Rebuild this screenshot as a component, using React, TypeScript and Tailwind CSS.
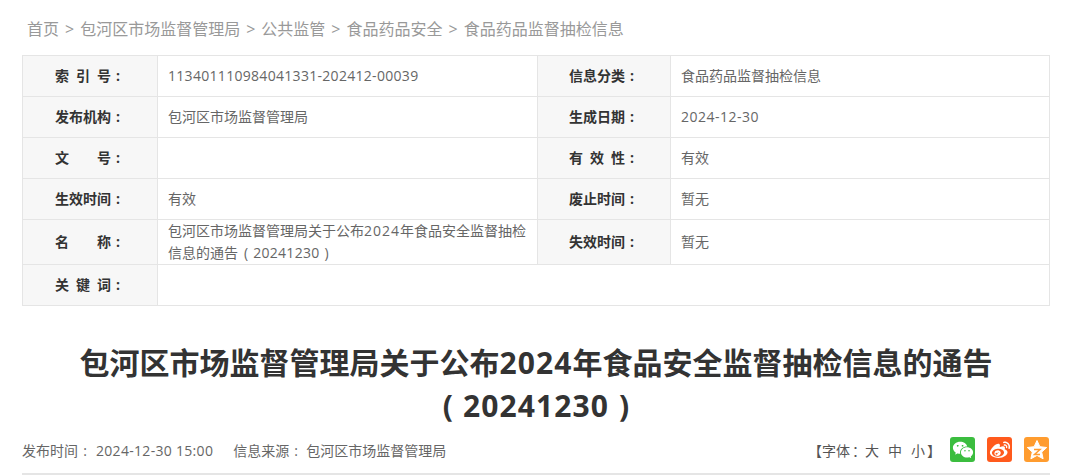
import { RiWechatFill, RiWeiboFill } from "react-icons/ri";
import type { ReactNode } from "react";

function Label({ chars }: { chars: string[] }) {
  return (
    <td className="border border-[#e5e5e5] bg-[#f7f7f7] pb-[2px] text-center font-bold text-[#333]">
      <span className="inline-flex w-[70px]">
        <span className="flex w-[56px] justify-between">
          {chars.map((c, i) => (
            <span key={i}>{c}</span>
          ))}
        </span>
        <span className="w-[14px] text-center">:</span>
      </span>
    </td>
  );
}

function Val({ children, colSpan }: { children?: ReactNode; colSpan?: number }) {
  return (
    <td colSpan={colSpan} className="border border-[#e5e5e5] px-[10px] text-[#666] leading-[22px]">
      {children}
    </td>
  );
}

function Num({ children }: { children: ReactNode }) {
  return <span className="tracking-[0.3px]">{children}</span>;
}

export default function App() {
  return (
    <div className="w-[1071px] h-[476px] overflow-hidden bg-white font-['Open_Sans','Noto_Sans_CJK_SC',sans-serif]">
      <div className="ml-[22px] w-[1028px]">
        <div className="h-[55px] pl-[5px] pt-[17px] text-[16px] leading-[24px] text-[#999] flex gap-[6px] whitespace-nowrap">
          <span>首页</span><span>&gt;</span><span>包河区市场监督管理局</span><span>&gt;</span><span>公共监管</span><span>&gt;</span><span>食品药品安全</span><span>&gt;</span><span>食品药品监督抽检信息</span>
        </div>
        <table className="w-[1027px] table-fixed border-collapse text-[14px]">
          <colgroup>
            <col className="w-[135px]" />
            <col className="w-[380px]" />
            <col className="w-[133px]" />
            <col className="w-[379px]" />
          </colgroup>
          <tbody>
            <tr className="h-[41px]">
              <Label chars={["索", "引", "号"]} /><Val><Num>113401110984041331-202412-00039</Num></Val>
              <Label chars={["信", "息", "分", "类"]} /><Val>食品药品监督抽检信息</Val>
            </tr>
            <tr className="h-[41px]">
              <Label chars={["发", "布", "机", "构"]} /><Val>包河区市场监督管理局</Val>
              <Label chars={["生", "成", "日", "期"]} /><Val><span className="tracking-[0.5px]">2024-12-30</span></Val>
            </tr>
            <tr className="h-[41px]">
              <Label chars={["文", "号"]} /><Val />
              <Label chars={["有", "效", "性"]} /><Val>有效</Val>
            </tr>
            <tr className="h-[41px]">
              <Label chars={["生", "效", "时", "间"]} /><Val>有效</Val>
              <Label chars={["废", "止", "时", "间"]} /><Val>暂无</Val>
            </tr>
            <tr className="h-[45px]">
              <Label chars={["名", "称"]} />
              <Val>
                包河区市场监督管理局关于公布<span className="tracking-[1px]">2024</span>年食品安全监督抽检
                <br />
                信息的通告<span className="ml-[6px]">(</span><span className="ml-[5px]"><Num>20241230</Num></span><span className="ml-[5px]">)</span>
              </Val>
              <Label chars={["失", "效", "时", "间"]} /><Val>暂无</Val>
            </tr>
            <tr className="h-[41px]">
              <Label chars={["关", "键", "词"]} /><Val colSpan={3} />
            </tr>
          </tbody>
        </table>
        <h1 className="mt-[35px] text-center text-[30px] leading-[43px] font-bold text-[#333] whitespace-nowrap">
          包河区市场监督管理局关于公布<span className="tracking-[1.1px]">2024</span>年食品安全监督抽检信息的通告
          <span className="block">
            <span>(</span><span className="mx-[10px] tracking-[1.1px]">20241230</span><span>)</span>
          </span>
        </h1>
        <div className="h-[48px] pt-[10px] border-b-2 border-[#e5e5e5] flex items-start justify-between text-[14px] text-[#666]">
          <div className="flex items-center h-[25px] pt-[1px] whitespace-nowrap">
            <span>发布时间</span><span className="w-[14px] text-center">:</span>
            <span className="ml-[4px]"><Num>2024-12-30 15:00</Num></span>
            <span className="ml-[20px]">信息来源</span><span className="w-[14px] text-center">:</span>
            <span className="ml-[3px]">包河区市场监督管理局</span>
          </div>
          <div className="flex items-center">
            <span className="flex items-center h-[25px] pt-[1px] mr-[9px] text-[#555] whitespace-nowrap">
              <span className="w-[14px]">【</span>
              <span>字体</span>
              <span className="w-[15px] pl-[2px]">：</span>
              <span className="flex gap-[9px]"><span>大</span><span>中</span><span>小</span></span>
              <span className="w-[14px] ml-[2px]">】</span>
            </span>
            <div className="flex gap-[12px] mr-px">
              <span className="w-[25px] h-[25px] rounded-[3px] bg-[#3bbd3f] flex items-center justify-center text-white"><RiWechatFill size={22} /></span>
              <span className="w-[25px] h-[25px] rounded-[3px] bg-[#ff5a1d] flex items-center justify-center text-white"><RiWeiboFill size={22} /></span>
              <span className="w-[25px] h-[25px] rounded-[3px] bg-[#ff9c2f] flex items-center justify-center">
                <svg viewBox="0 0 24 24" width="24" height="24">
                  <path d="M12 2.500l2.900 6.200 6.800.8-5 4.600 1.400 6.700L12 17.400 5.900 20.800l1.400-6.700-5-4.600 6.800-.8z" fill="#fff" stroke="#fff" strokeLinejoin="round" />
                  <path d="M9 11.500h6l-5.500 5H15" fill="none" stroke="#ff9c2f" strokeWidth="1.500" />
                </svg>
              </span>
            </div>
          </div>
        </div>
      </div>
    </div>
  );
}
